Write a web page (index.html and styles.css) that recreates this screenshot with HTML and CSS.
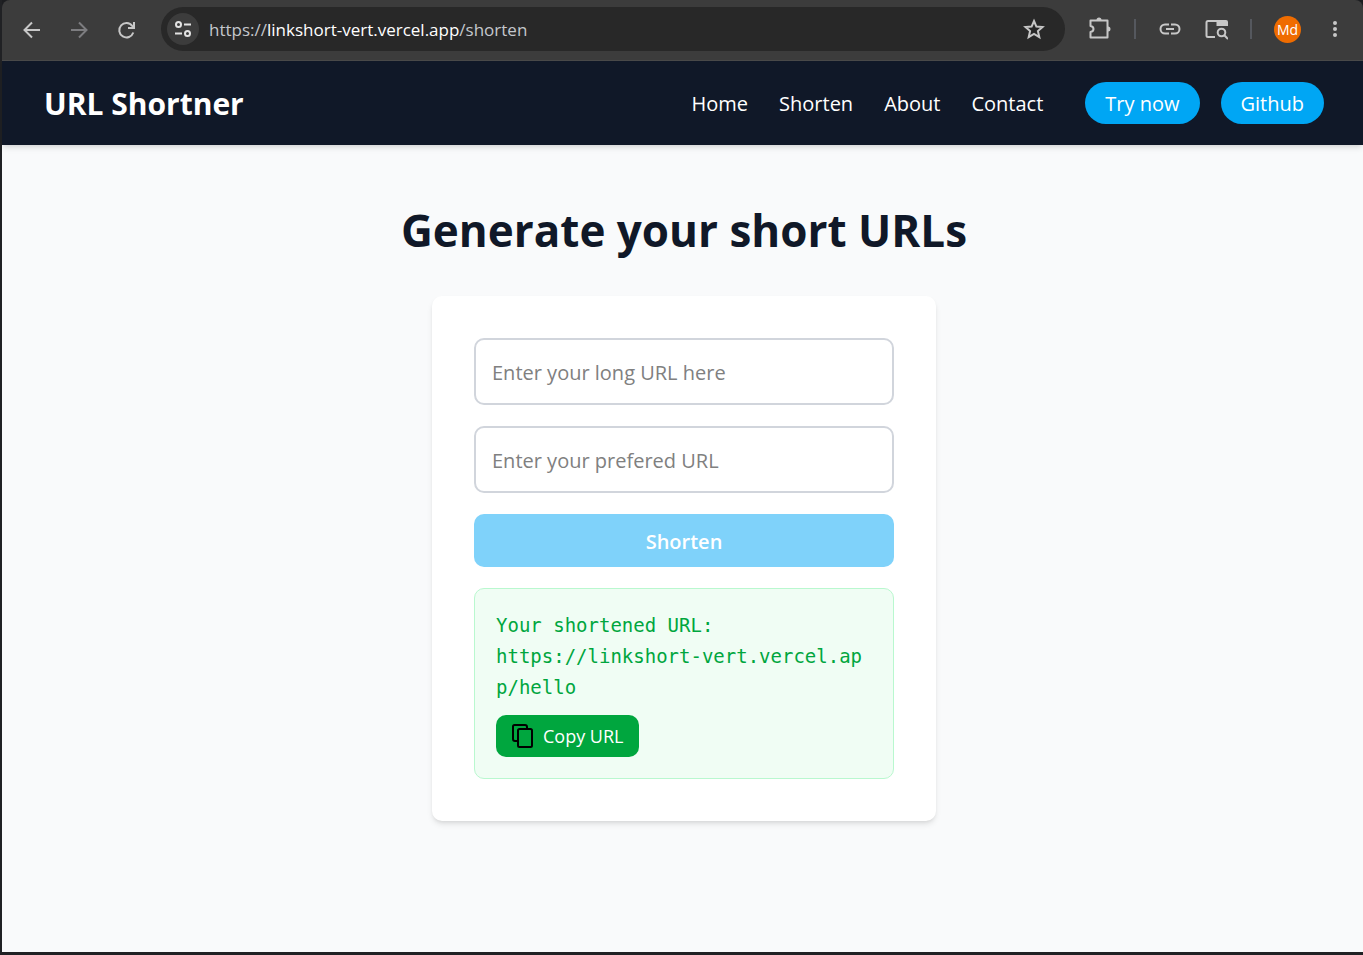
FILE: index.html
```
<!DOCTYPE html>
<html lang="en">
<head>
  <meta charset="UTF-8" />
  <meta name="viewport" content="width=device-width, initial-scale=1.0" />
  <title>URL Shortner</title>
  <link rel="stylesheet" href="styles.css">
</head>
<body>
<div class="browser">
  <div class="toolbar">
    <button class="tool" aria-label="Back">
      <svg width="24" height="24" viewBox="0 0 24 24"><path d="M20 12H5M12 4.500L4.500 12l7.500 7.500" /></svg>
    </button>
    <button class="tool dim" aria-label="Forward">
      <svg width="24" height="24" viewBox="0 0 24 24"><path d="M4 12h15M12 4.500l7.500 7.500-7.500 7.500" /></svg>
    </button>
    <button class="tool" aria-label="Reload">
      <svg width="24" height="24" viewBox="0 0 24 24"><path d="M19.300 14.500A7.200 7.200 0 1 1 18.300 8l1.500 1.500M20 4v6h-6" /></svg>
    </button>
    <div class="address">
      <button class="site-info" aria-label="Site information">
        <svg width="20" height="20" viewBox="0 0 20 20"><circle cx="5.500" cy="5.500" r="2.500" /><path d="M11 5.500h7M2 14.500h7" /><circle cx="14.500" cy="14.500" r="2.500" /></svg>
      </button>
      <div class="url" role="textbox" aria-label="Address" contenteditable="true" spellcheck="false">https://<span class="domain">linkshort-vert.vercel.app</span>/shorten</div>
      <button class="star" aria-label="Bookmark">
        <svg width="24" height="24" viewBox="0 0 24 24"><path d="M12 4l2.400 5.600 6.100.5-4.600 4 1.400 6-5.300-3.200-5.300 3.200 1.400-6-4.600-4 6.100-.5z" /></svg>
      </button>
    </div>
    <div class="actions">
      <button class="tool" aria-label="Extensions">
        <svg width="24" height="24" viewBox="0 0 24 24"><path d="M2.500 3.500h17v17h-17v-5.500c4-.5 4-5.500 0-6z" stroke-linejoin="round" /><path class="fill" d="M8.500 3a2.500 2.500 0 0 1 5 0zM20 9.500a2.500 2.500 0 0 1 0 5z" /></svg>
      </button>
      <span class="divider"></span>
      <button class="tool" aria-label="Copy link">
        <svg width="24" height="24" viewBox="0 0 24 24"><path d="M11 7.500H7a4.500 4.500 0 0 0 0 9h4M13 7.500h4a4.500 4.500 0 0 1 0 9h-4M8 12h8" /></svg>
      </button>
      <button class="tool" aria-label="Search this page">
        <svg width="24" height="24" viewBox="0 0 24 24"><path d="M11 20H4a1.500 1.500 0 0 1-1.500-1.500v-13A1.500 1.500 0 0 1 4 4h17" /><path class="fill" d="M12.500 3H22a2 2 0 0 1 2 2v4H12.500z" /><circle cx="17.500" cy="15.500" r="3.800" /><path d="M20.300 18.300l3.700 3.700" /></svg>
      </button>
      <span class="divider"></span>
      <button class="profile">Md</button>
      <button class="tool" aria-label="Menu">
        <svg width="24" height="24" viewBox="0 0 24 24"><g class="fill"><circle cx="12" cy="6" r="2" /><circle cx="12" cy="12" r="2" /><circle cx="12" cy="18" r="2" /></g></svg>
      </button>
    </div>
  </div>

  <nav class="navbar">
    <a class="logo" href="#">URL Shortner</a>
    <ul class="links">
      <li><a href="#">Home</a></li>
      <li><a href="#">Shorten</a></li>
      <li><a href="#">About</a></li>
      <li><a href="#">Contact</a></li>
    </ul>
    <div class="buttons">
      <button class="pill">Try now</button>
      <button class="pill">Github</button>
    </div>
  </nav>

  <main>
    <h1>Generate your short URLs</h1>
    <form class="card">
      <input type="text" class="field" placeholder="Enter your long URL here" aria-label="Long URL">
      <input type="text" class="field" placeholder="Enter your prefered URL" aria-label="Prefered URL">
      <button type="submit" class="submit" disabled>Shorten</button>
      <div class="result">
        <code>Your shortened URL: <a href="#">https://linkshort-vert.vercel.app/hello</a></code>
        <button type="button" class="copy">
          <svg width="24" height="24" viewBox="0 0 24 24"><path d="M6 17H4a2 2 0 0 1-2-2V2.500A1.500 1.500 0 0 1 3.500 1H14a2 2 0 0 1 2 2v2" /><rect x="7" y="5" width="14" height="18" rx="1.500" /></svg>
          Copy URL
        </button>
      </div>
    </form>
  </main>
</div>
</body>
</html>
```

FILE: styles.css
```
* {
  box-sizing: border-box;
}
body {
  margin: 0;
  background-color: #1c1d20;
  font-family: "Open Sans", "Noto Sans", sans-serif;
  font-size: 20px;
  color: #101828;
}
button, input {
  font-family: inherit;
  font-size: inherit;
}
button {
  border: none;
  padding: 0;
  background: none;
  color: white;
}
a {
  color: inherit;
  text-decoration: none;
}
svg {
  display: block;
  flex: none;
  fill: none;
  stroke: currentColor;
  stroke-width: 2;
}
.fill {
  fill: currentColor;
  stroke: none;
}
.browser {
  display: flex;
  flex-direction: column;
  min-height: 100vh;
  border-left: 2px solid #202124;
  border-bottom: 3px solid #202124;
}

/* browser bar */
.toolbar {
  display: flex;
  align-items: center;
  height: 61px;
  padding: 0 16px 2px 18px;
  background-color: #3c3c3c;
  border-bottom: 1px solid #4a4a4a;
  border-radius: 8px 8px 0 0;
}
.tool {
  color: #c7c7c7;
}
.toolbar > .tool {
  margin-right: 23px;
  padding-top: 2px;
}
.toolbar > .dim {
  color: #7d7d80;
}
.address {
  flex: 1;
  display: flex;
  align-items: center;
  height: 44px;
  padding: 0 19px 0 6px;
  border-radius: 22px;
  background-color: #282828;
}
.site-info {
  display: grid;
  place-items: center;
  width: 32px;
  height: 32px;
  border-radius: 50%;
  background-color: #3c3c3c;
  color: #e3e3e3;
}
.url {
  flex: 1;
  margin-left: 10px;
  font-size: 17px;
  color: #c4c7cc;
  outline: none;
  white-space: nowrap;
}
.domain {
  color: white;
}
.star {
  color: #c7c7c7;
}
.actions {
  display: flex;
  align-items: center;
  gap: 22px;
  margin-left: 23px;
}
.divider {
  width: 2px;
  height: 20px;
  background-color: #55585e;
}
.profile {
  width: 27px;
  height: 27px;
  border-radius: 50%;
  background-color: #ef6c00;
  font-size: 14px;
}

/* site header */
.navbar {
  display: flex;
  align-items: center;
  height: 84px;
  padding: 0 39px 0 42px;
  background-color: #101828;
  color: white;
  box-shadow: 0 4px 6px -1px rgba(0, 0, 0, 0.1), 0 2px 4px -2px rgba(0, 0, 0, 0.1);
  z-index: 1;
}
.logo {
  margin-right: auto;
  font-size: 30px;
  font-weight: 700;
}
.links {
  display: flex;
  gap: 31px;
  margin: 0;
  padding: 0;
  list-style: none;
}
.buttons {
  display: flex;
  gap: 21px;
  margin-left: 42px;
}
.pill {
  height: 42px;
  padding: 0 20px;
  border-radius: 21px;
  background-color: #00a6f4;
}

main {
  flex: 1;
  display: flex;
  flex-direction: column;
  align-items: center;
  padding: 55px 0 56px 3px;
  background-color: #f9fafb;
}
h1 {
  margin: 0 0 36px;
  font-size: 44px;
  line-height: 60px;
}
.card {
  display: flex;
  flex-direction: column;
  gap: 21px;
  width: 504px;
  max-width: 100%;
  padding: 42px;
  border-radius: 10px;
  background-color: white;
  box-shadow: 0 4px 6px -1px rgba(0, 0, 0, 0.1), 0 2px 4px -2px rgba(0, 0, 0, 0.1);
}
.field {
  height: 67px;
  padding: 2px 16px 0;
  border: 2px solid #d1d5dc;
  border-radius: 10px;
}
.field::placeholder {
  color: #808080;
}
.submit {
  height: 53px;
  padding-top: 2px;
  border-radius: 10px;
  background-color: #7fd2fa;
  font-weight: 600;
}
.result {
  padding: 21px;
  border: 1px solid #b9f8cf;
  border-radius: 10px;
  background-color: #f0fdf4;
}
code {
  display: block;
  margin-bottom: 12px;
  font-family: "DejaVu Sans Mono", monospace;
  font-size: 19px;
  line-height: 31px;
  color: #00a63e;
}
code a {
  display: block;
  word-break: break-all;
}
.copy {
  display: flex;
  align-items: center;
  gap: 8px;
  height: 42px;
  padding: 0 15px;
  border-radius: 10px;
  background-color: #00a63e;
  font-size: 18px;
}
.copy svg {
  color: black;
}
```
